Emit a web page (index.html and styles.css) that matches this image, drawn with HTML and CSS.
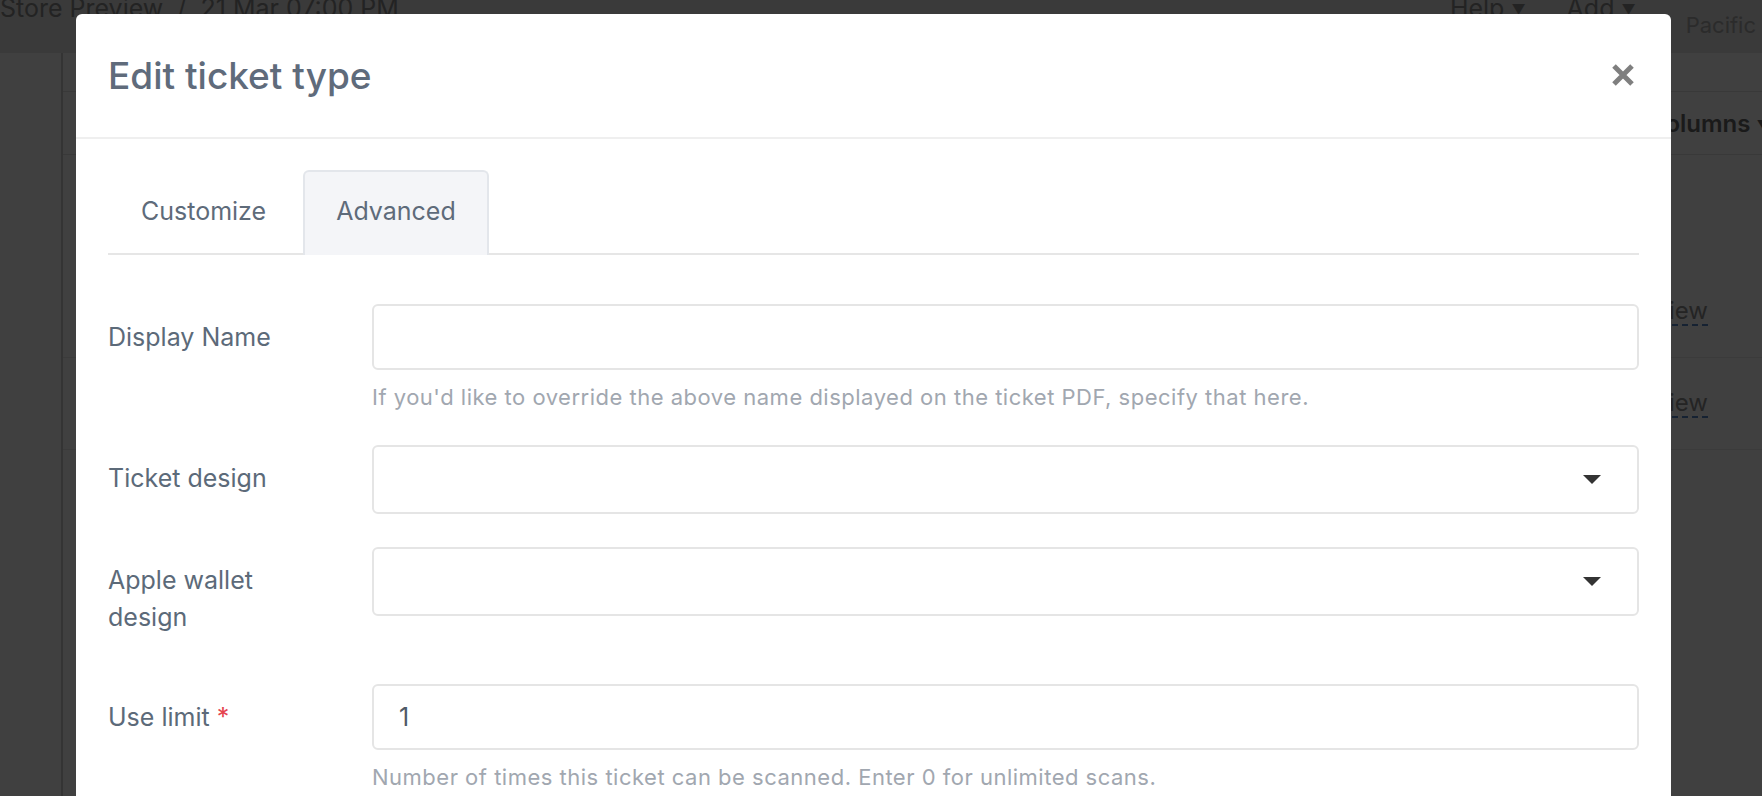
FILE: index.html
```html
<!DOCTYPE html>
<html lang="en">
<head>
  <meta charset="UTF-8">
  <title>Edit ticket type</title>
  <link rel="stylesheet" href="styles.css">
</head>
<body>

  <!-- Page behind the modal -->
  <div class="page">
    <header class="topbar">
      <div class="crumbs">Store Preview &nbsp;/&nbsp; 21 Mar 07:00 PM</div>
      <div class="top-actions">
        <span class="top-link">Help <span class="tri">&#9660;</span></span>
        <span class="top-link add">Add <span class="tri">&#9660;</span></span>
        <span class="tz">Pacific</span>
      </div>
    </header>
    <div class="layout">
      <aside class="sidebar"></aside>
      <main class="content">
        <div class="toolbar">
          <span class="columns">Columns <span class="tri">&#9660;</span></span>
        </div>
        <div class="list-head"></div>
        <div class="list-row"><a class="view-link">View</a></div>
        <div class="list-row"><a class="view-link">View</a></div>
      </main>
    </div>
  </div>

  <!-- Edit ticket type modal -->
  <div class="backdrop">
    <div class="modal">
      <div class="modal-header">
        <h2 class="modal-title">Edit ticket type</h2>
        <button class="close-btn" aria-label="Close">
          <svg width="24" height="24" viewBox="0 0 24 24">
            <path d="M3 3 L21 21 M21 3 L3 21" stroke="#7f7f7f" stroke-width="5" fill="none"/>
          </svg>
        </button>
      </div>

      <div class="modal-body">
        <ul class="tabs">
          <li class="tab">Customize</li>
          <li class="tab active">Advanced</li>
        </ul>

        <div class="form-row">
          <label class="form-label">Display Name</label>
          <div class="form-field">
            <input type="text" class="form-input">
            <p class="help">If you'd like to override the above name displayed on the ticket PDF, specify that here.</p>
          </div>
        </div>

        <div class="form-row">
          <label class="form-label">Ticket design</label>
          <div class="form-field">
            <div class="form-select">
              <svg class="caret" width="18" height="10" viewBox="0 0 18 10"><path d="M0 0 H18 L9 9 Z" fill="#333"/></svg>
            </div>
          </div>
        </div>

        <div class="form-row">
          <label class="form-label">Apple wallet<br>design</label>
          <div class="form-field">
            <div class="form-select">
              <svg class="caret" width="18" height="10" viewBox="0 0 18 10"><path d="M0 0 H18 L9 9 Z" fill="#333"/></svg>
            </div>
          </div>
        </div>

        <div class="form-row">
          <label class="form-label">Use limit <span class="req">*</span></label>
          <div class="form-field">
            <input type="text" class="form-input" value="1">
            <p class="help">Number of times this ticket can be scanned. Enter 0 for unlimited scans.</p>
          </div>
        </div>
      </div>
    </div>
  </div>

</body>
</html>
```

FILE: styles.css
```css
body {
  margin: 0;
  font-family: Inter, "Noto Sans", sans-serif;
  overflow: hidden;
  height: 796px;
}

/* page behind the overlay */
.page {
  height: 796px;
  background: #fff;
}
.topbar {
  display: flex;
  align-items: flex-start;
  height: 53px;
  background: #e6e6e6;
}
.crumbs {
  font-size: 25px;
  line-height: 28px;
  margin-top: -6px;
  color: #8c8c8c;
}
.top-actions {
  display: flex;
  align-items: flex-start;
  margin-left: auto;
}
.top-link {
  font-size: 25px;
  line-height: 28px;
  margin-top: -6px;
  margin-right: 41px;
  color: #8c8c8c;
}
.top-link.add {
  margin-right: 50px;
}
.tri {
  font-size: 14px;
  vertical-align: middle;
}
.tz {
  font-size: 22px;
  line-height: 28px;
  margin-top: 11px;
  margin-right: 6px;
  color: #ababab;
}
.layout {
  display: flex;
  height: 743px;
}
.sidebar {
  width: 61px;
  border-right: 2px solid #cfcfcf;
}
.content {
  flex: 1;
  padding-top: 38px;
  margin-right: -9px;
}
.toolbar {
  display: flex;
  justify-content: flex-end;
  align-items: center;
  height: 62px;
  border-top: 1px solid #e2e2e2;
  border-bottom: 1px solid #e2e2e2;
}
.columns {
  font-size: 24px;
  font-weight: 600;
  color: #6a6a6a;
}
.list-head {
  height: 111px;
}
.list-row {
  display: flex;
  justify-content: flex-end;
  align-items: center;
  height: 91px;
  border-bottom: 1px solid #ececec;
  padding-right: 63px;
}
.view-link {
  font-size: 24px;
  color: #909090;
  border-bottom: 2px dashed #5a86c8;
  line-height: 26px;
}

/* modal */
.backdrop {
  position: fixed;
  top: 0;
  left: 0;
  width: 100%;
  height: 100%;
  background: rgba(0, 0, 0, 0.75);
  padding-top: 14px;
  box-sizing: border-box;
}
.modal {
  width: 1595px;
  height: 900px;
  margin-left: 76px;
  background: #fff;
  border-radius: 6px;
}
.modal-header {
  display: flex;
  align-items: center;
  justify-content: space-between;
  height: 123px;
  padding: 0 36px 0 32px;
  border-bottom: 2px solid #efefef;
}
.modal-title {
  margin: 0;
  font-size: 37px;
  font-weight: 500;
  color: #5f6b7b;
}
.close-btn {
  border: 0;
  background: none;
  padding: 0;
  width: 24px;
  height: 24px;
  margin-top: -2px;
}
.modal-body {
  padding: 31px 32px 0;
}

/* tabs */
.tabs {
  display: flex;
  gap: 4px;
  list-style: none;
  margin: 0 0 49px;
  padding: 0;
  border-bottom: 2px solid #e6e6e6;
}
.tab {
  height: 81px;
  line-height: 78px;
  padding: 0 31px;
  font-size: 25px;
  color: #5e6b7a;
  border: 2px solid transparent;
  border-bottom: 0;
  border-radius: 6px 6px 0 0;
  margin-bottom: -2px;
}
.tab.active {
  background: #f4f5f8;
  border-color: #e3e6eb;
  height: 83px;
}

/* form rows */
.form-row {
  display: grid;
  grid-template-columns: 264px 1fr;
  margin-bottom: 33px;
}
.form-label {
  padding: 15px 0;
  font-size: 25px;
  line-height: 37px;
  color: #5c6a79;
}
.req {
  color: #e5434e;
}
.form-input {
  display: block;
  width: 100%;
  height: 66px;
  box-sizing: border-box;
  border: 2px solid #e5e5e5;
  border-radius: 6px;
  padding: 0 25px;
  font-family: inherit;
  font-size: 25px;
  color: #4f5a66;
  outline: none;
}
.form-select {
  display: flex;
  align-items: center;
  justify-content: flex-end;
  height: 69px;
  box-sizing: border-box;
  border: 2px solid #e5e5e5;
  border-radius: 6px;
  padding-right: 36px;
}
.help {
  margin: 12px 0 0;
  font-size: 22px;
  line-height: 30px;
  letter-spacing: 0.5px;
  color: #a1a7b0;
}
```
